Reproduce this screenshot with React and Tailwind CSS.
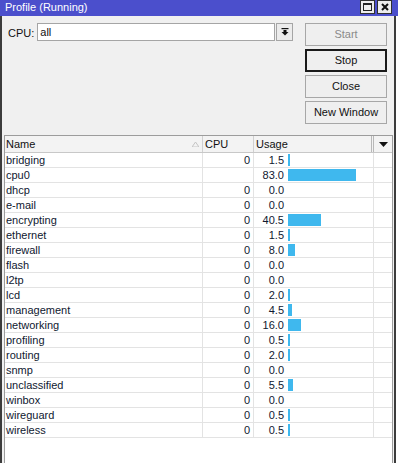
import React from 'react';

const rows = [
  ['bridging', '0', 1.5],
  ['cpu0', '', 83.0],
  ['dhcp', '0', 0.0],
  ['e-mail', '0', 0.0],
  ['encrypting', '0', 40.5],
  ['ethernet', '0', 1.5],
  ['firewall', '0', 8.0],
  ['flash', '0', 0.0],
  ['l2tp', '0', 0.0],
  ['lcd', '0', 2.0],
  ['management', '0', 4.5],
  ['networking', '0', 16.0],
  ['profiling', '0', 0.5],
  ['routing', '0', 2.0],
  ['snmp', '0', 0.0],
  ['unclassified', '0', 5.5],
  ['winbox', '0', 0.0],
  ['wireguard', '0', 0.5],
  ['wireless', '0', 0.5],
];

const WinButton = ({ children, disabled, active }) => (
  <button
    className={
      'h-[23px] w-[82px] bg-[#efefef] text-[11px] ' +
      (active ? 'border-2 border-[#1a1a1a] ' : 'border border-[#a7a7a7] ') +
      (disabled ? 'text-[#8a8a8a]' : 'text-[#111]')
    }
  >
    {children}
  </button>
);

const App = () => {
  return (
    <div
      className="w-[398px] h-[463px] bg-white flex flex-col overflow-hidden text-[11px] text-[#111]"
      style={{ fontFamily: '"Liberation Sans", Arial, sans-serif' }}
    >
      {/* Title bar */}
      <div className="h-[16px] bg-[#4b4fcc] flex items-start justify-between pl-[5px] pr-[6px]">
        <span className="text-white text-[11px] leading-[15px]">Profile (Running)</span>
        <div className="flex gap-[2px]">
          <div className="w-[15px] h-[14px] bg-[#ededed] border border-[#303030] flex items-center justify-center">
            <div className="w-[9px] h-[8px] border border-[#222] border-t-2"></div>
          </div>
          <div className="w-[15px] h-[14px] bg-[#ededed] border border-[#303030] flex items-center justify-center">
            <svg width="8" height="8" viewBox="0 0 8 8">
              <path d="M1 1 L7 7 M7 1 L1 7" stroke="#111" strokeWidth="2" />
            </svg>
          </div>
        </div>
      </div>

      {/* Body */}
      <div className="flex-1 flex flex-col bg-[#f0f0f0] border-l-2 border-r-2 border-[#3c3c3c] mr-[2px] min-h-0">
        {/* Controls */}
        <div className="h-[119px] flex pt-[7px]">
          <div className="flex items-start pl-[6px] w-[301px]">
            <span className="mt-[2px] mr-[3px]">CPU:</span>
            <div className="h-[18px] w-[238px] bg-white border border-[#a5a5a5] px-[2px] leading-[16px]">all</div>
            <div className="ml-[1px] h-[18px] w-[17px] bg-[#ececec] border border-[#a5a5a5] flex items-center justify-center">
              <svg width="8" height="8" viewBox="0 0 8 8">
                <rect x="0.5" y="0" width="7" height="1.2" fill="#111" />
                <rect x="2.5" y="2" width="3" height="2" fill="#111" />
                <path d="M0.5 4 L7.5 4 L4 7.5 Z" fill="#111" />
              </svg>
            </div>
          </div>
          <div className="flex flex-col gap-[3px] ml-[2px]">
            <WinButton disabled>Start</WinButton>
            <WinButton active>Stop</WinButton>
            <WinButton>Close</WinButton>
            <WinButton>New Window</WinButton>
          </div>
        </div>

        {/* Table */}
        <div className="flex-1 ml-[2px] mr-[1px] bg-white border border-[#9c9c9c] border-b-0 flex flex-col min-h-0">
          <div className="h-[17px] flex bg-[#f3f3f3] border-b border-[#c8c8c8]">
            <div className="w-[198px] flex items-center justify-between pl-[1px] pr-[3px] border-r border-[#d0d0d0]">
              <span>Name</span>
              <svg width="7" height="5" viewBox="0 0 7 5">
                <path d="M3.5 0 L7 5 L0 5 Z" fill="none" stroke="#c4c4c4" strokeWidth="1" />
              </svg>
            </div>
            <div className="w-[51px] flex items-center pl-[2px] border-r border-[#d0d0d0]">CPU</div>
            <div className="w-[120px] flex items-center pl-[2px] border-r-[3px] border-double border-[#b8b8b8]">Usage</div>
            <div className="flex-1 flex items-center justify-center">
              <svg width="9" height="5" viewBox="0 0 9 5">
                <path d="M0 0 L9 0 L4.5 5 Z" fill="#111" />
              </svg>
            </div>
          </div>
          {rows.map(([name, cpu, usage]) => (
            <div key={name} className="h-[15px] flex border-b border-[#e3e3e3] leading-[14px] text-[#0f1830]">
              <div className="w-[198px] pl-[1px] border-r border-[#e3e3e3]">{name}</div>
              <div className="w-[51px] text-right pr-[3px] border-r border-[#e3e3e3]">{cpu}</div>
              <div className="w-[120px] flex items-center border-r border-[#e3e3e3]">
                <span className="w-[30px] text-right">{usage.toFixed(1)}</span>
                {usage > 0 && (
                  <div
                    className="ml-[4px] h-[12px] bg-[#3fb8ee]"
                    style={{ width: Math.max(2, Math.round(usage * 0.82)) + 'px' }}
                  ></div>
                )}
              </div>
              <div className="flex-1"></div>
            </div>
          ))}
        </div>
      </div>
    </div>
  );
};

export default App;
